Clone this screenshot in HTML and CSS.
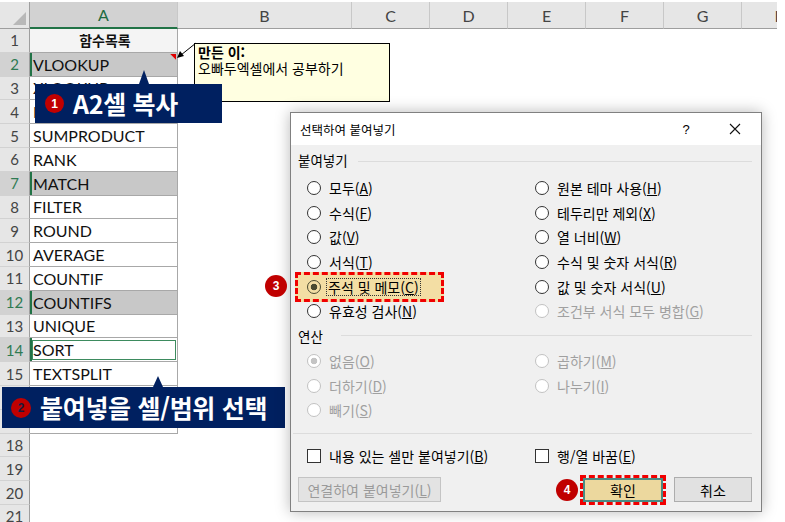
FILE: index.html
```html
<!DOCTYPE html>
<html lang="ko">
<head>
<meta charset="utf-8">
<link rel="stylesheet" href="styles.css">
</head>
<body>
<div class="sheet">
  <div class="hdr corner"><span class="tri"></span></div>
  <div class="hdr sel">A</div>
  <div class="hdr">B</div>
  <div class="hdr">C</div>
  <div class="hdr">D</div>
  <div class="hdr">E</div>
  <div class="hdr">F</div>
  <div class="hdr">G</div>
  <div class="hdr">H</div>

  <div class="rh">1</div><div class="ca head">함수목록</div><div class="rest"></div>
  <div class="rh on">2</div><div class="ca pick">VLOOKUP<span class="flag"></span></div><div class="rest"></div>
  <div class="rh">3</div><div class="ca">XLOOKUP</div><div class="rest"></div>
  <div class="rh">4</div><div class="ca">INDEX</div><div class="rest"></div>
  <div class="rh">5</div><div class="ca">SUMPRODUCT</div><div class="rest"></div>
  <div class="rh">6</div><div class="ca">RANK</div><div class="rest"></div>
  <div class="rh on">7</div><div class="ca pick">MATCH</div><div class="rest"></div>
  <div class="rh">8</div><div class="ca">FILTER</div><div class="rest"></div>
  <div class="rh">9</div><div class="ca">ROUND</div><div class="rest"></div>
  <div class="rh">10</div><div class="ca">AVERAGE</div><div class="rest"></div>
  <div class="rh">11</div><div class="ca">COUNTIF</div><div class="rest"></div>
  <div class="rh on">12</div><div class="ca pick">COUNTIFS</div><div class="rest"></div>
  <div class="rh">13</div><div class="ca">UNIQUE</div><div class="rest"></div>
  <div class="rh on">14</div><div class="ca active">SORT</div><div class="rest"></div>
  <div class="rh">15</div><div class="ca">TEXTSPLIT</div><div class="rest"></div>
  <div class="rh">16</div><div class="ca">TOCOL</div><div class="rest"></div>
  <div class="rh">17</div><div class="ca">VSTACK</div><div class="rest"></div>
  <div class="rh">18</div><div class="ce"></div><div class="rest"></div>
  <div class="rh">19</div><div class="ce"></div><div class="rest"></div>
  <div class="rh">20</div><div class="ce"></div><div class="rest"></div>
  <div class="rh">21</div><div class="ce"></div><div class="rest"></div>
</div>

<svg class="cmt-arrow" width="26" height="22" viewBox="0 0 26 22">
  <line x1="7" y1="15" x2="22" y2="3" stroke="#000" stroke-width="1"/>
  <polygon points="3,18 6,11 10,16" fill="#000"/>
</svg>
<div class="cmt">
  <div class="cmt-author">만든 이:</div>
  <div>오빠두엑셀에서 공부하기</div>
</div>

<div class="callout co1">
  <span class="num">1</span><span class="co-text">A2셀 복사</span>
</div>
<div class="callout co2">
  <span class="num dark">2</span><span class="co-text">붙여넣을 셀/범위 선택</span>
</div>

<div class="dlg">
  <div class="dlg-title">
    <span class="dlg-name">선택하여 붙여넣기</span>
    <span class="help">?</span>
    <span class="close"><svg width="12" height="12" viewBox="0 0 12 12"><path d="M1 1L11 11M11 1L1 11" stroke="#111" stroke-width="1.1" fill="none"/></svg></span>
  </div>
  <div class="dlg-body">
    <div class="grp"><span>붙여넣기</span><i></i></div>
    <div class="opts">
      <div class="r"><span class="rad"></span><span>모두(<u>A</u>)</span></div>
      <div class="r"><span class="rad"></span><span>원본 테마 사용(<u>H</u>)</span></div>
      <div class="r"><span class="rad"></span><span>수식(<u>F</u>)</span></div>
      <div class="r"><span class="rad"></span><span>테두리만 제외(<u>X</u>)</span></div>
      <div class="r"><span class="rad"></span><span>값(<u>V</u>)</span></div>
      <div class="r"><span class="rad"></span><span>열 너비(<u>W</u>)</span></div>
      <div class="r"><span class="rad"></span><span>서식(<u>T</u>)</span></div>
      <div class="r"><span class="rad"></span><span>수식 및 숫자 서식(<u>R</u>)</span></div>
      <div class="r hl"><span class="rad checked"></span><span class="focus">주석 및 메모(<u>C</u>)</span></div>
      <div class="r"><span class="rad"></span><span>값 및 숫자 서식(<u>U</u>)</span></div>
      <div class="r"><span class="rad"></span><span>유효성 검사(<u>N</u>)</span></div>
      <div class="r off"><span class="rad"></span><span>조건부 서식 모두 병합(<u>G</u>)</span></div>
    </div>
    <div class="grp grp2"><span>연산</span><i></i></div>
    <div class="opts ops">
      <div class="r off"><span class="rad checked"></span><span>없음(<u>O</u>)</span></div>
      <div class="r off"><span class="rad"></span><span>곱하기(<u>M</u>)</span></div>
      <div class="r off"><span class="rad"></span><span>더하기(<u>D</u>)</span></div>
      <div class="r off"><span class="rad"></span><span>나누기(<u>I</u>)</span></div>
      <div class="r off"><span class="rad"></span><span>빼기(<u>S</u>)</span></div>
    </div>
    <div class="sep"></div>
    <div class="opts checks">
      <div class="r"><span class="chk"></span><span>내용 있는 셀만 붙여넣기(<u>B</u>)</span></div>
      <div class="r"><span class="chk"></span><span>행/열 바꿈(<u>E</u>)</span></div>
    </div>
    <div class="btns">
      <span class="btn link">연결하여 붙여넣기(<u>L</u>)</span>
      <span class="ok-wrap"><span class="btn ok">확인</span></span>
      <span class="btn cancel">취소</span>
    </div>
  </div>
</div>

<span class="badge b3">3</span>
<span class="badge b4">4</span>
</body>
</html>
```
FILE: styles.css
```css
* { box-sizing: border-box; margin: 0; padding: 0; }

body {
  margin: 0;
  width: 785px;
  height: 522px;
  overflow: hidden;
  background: #fff;
  position: relative;
  font-family: "Noto Sans CJK KR", sans-serif;
}

/* ---------- spreadsheet ---------- */
.sheet {
  display: grid;
  grid-template-columns: 30px 148px 174px 78px 78px 78px 78px 78px 78px;
  grid-template-rows: 27px;
  grid-auto-rows: 23.8px;
  margin-top: 2px;
  width: 777px;
  overflow: hidden;
  font-family: Lato, "Noto Sans CJK KR", sans-serif;
}

.hdr {
  background: #e6e6e6;
  border-right: 1px solid #c8c8c8;
  border-bottom: 1px solid #9e9e9e;
  display: flex;
  align-items: center;
  justify-content: center;
  font-size: 16px;
  color: #444;
}
.hdr.sel {
  background: #d2d2d2;
  color: #1e6b41;
  border-bottom: 2px solid #217346;
}
.corner {
  justify-content: flex-end;
  align-items: flex-end;
  padding: 0 3px 3px 0;
  border-right: 1px solid #9e9e9e;
}
.corner .tri {
  width: 13px;
  height: 13px;
  background: #b8b8b8;
  clip-path: polygon(100% 0, 100% 100%, 0 100%);
}

.rh {
  background: #e6e6e6;
  border-right: 1px solid #9e9e9e;
  border-bottom: 1px solid #d2d2d2;
  display: flex;
  align-items: center;
  justify-content: center;
  font-size: 15px;
  color: #444;
}
.rh.on {
  background: #d2d2d2;
  color: #2f7a52;
}

.ca {
  border-right: 1px solid #a8a8a8;
  border-bottom: 1px solid #a8a8a8;
  padding-left: 3px;
  font-size: 16px;
  color: #111;
  display: flex;
  align-items: center;
  background: #fff;
}
.ca.head {
  justify-content: center;
  font-family: "Noto Sans CJK KR", sans-serif;
  font-weight: 700;
  font-size: 14px;
  background: #f4f4f4;
}
.ca.pick {
  background: #c8c8c8;
  box-shadow: inset 2px 0 0 #217346;
}
.ca.active {
  box-shadow: inset 2px 0 0 #217346;
  outline: 1px solid #3d8b5e;
  outline-offset: -3px;
}
.flag {
  margin-left: auto;
  align-self: flex-start;
  margin-top: 1px;
  margin-right: 1px;
  width: 6px;
  height: 6px;
  background: #e00000;
  clip-path: polygon(0 0, 100% 0, 100% 100%);
}
.ce { background: #fff; }
.rest { grid-column: 3 / -1; }

/* ---------- comment ---------- */
.cmt-arrow {
  position: absolute;
  left: 174px;
  top: 40px;
}
.cmt {
  position: absolute;
  left: 194px;
  top: 43px;
  width: 196px;
  height: 59px;
  background: #ffffe1;
  border: 1px solid #000;
  padding: 0 3px;
  font-size: 14px;
  line-height: 16px;
  color: #000;
}
.cmt-author { font-weight: 700; }

/* ---------- callouts ---------- */
.callout {
  position: absolute;
  background: #002060;
  display: flex;
  align-items: center;
  color: #fff;
}
.callout::before {
  content: "";
  position: absolute;
  top: -14px;
  width: 0;
  height: 0;
  border-left: 5px solid transparent;
  border-right: 5px solid transparent;
  border-bottom: 14px solid #002060;
}
.co1 {
  left: 35px;
  top: 84px;
  width: 187px;
  height: 39px;
  padding-left: 10px;
}
.co1::before { left: 104px; }
.co2 {
  left: 2px;
  top: 387px;
  width: 283px;
  height: 41px;
  padding-left: 9px;
}
.co2::before { left: 151px; top: -11px; border-bottom-width: 11px; }

.num {
  width: 19px;
  height: 19px;
  border-radius: 50%;
  background: #c00000;
  color: #fff;
  font-family: "Liberation Sans", sans-serif;
  font-size: 12px;
  font-weight: 700;
  display: flex;
  align-items: center;
  justify-content: center;
  margin-right: 9px;
  flex: none;
}
.num.dark { color: #1b1b3a; width: 20px; height: 20px; }
.co-text {
  font-size: 25px;
  font-weight: 700;
  line-height: 1;
  white-space: nowrap;
  letter-spacing: -0.3px;
}

/* ---------- dialog ---------- */
.dlg {
  position: absolute;
  left: 290px;
  top: 112px;
  width: 472px;
  height: 400px;
  border: 1px solid #808080;
  background: #f0f0f0;
  box-shadow: 0 0 14px rgba(0, 0, 0, 0.28);
  font-size: 14px;
  color: #000;
  display: flex;
  flex-direction: column;
}
.dlg-title {
  height: 32px;
  background: #fff;
  display: flex;
  align-items: center;
  padding-left: 9px;
  padding-right: 3px;
  flex: none;
}
.dlg-name { font-size: 12.5px; }
.help {
  margin-left: auto;
  width: 32px;
  text-align: center;
  margin-right: 10px;
  font-family: "Liberation Sans", sans-serif;
  font-size: 13px;
}
.close {
  width: 46px;
  height: 32px;
  display: flex;
  align-items: center;
  justify-content: center;
}

.dlg-body {
  padding: 0 9px 0 7px;
  display: flex;
  flex-direction: column;
}
.grp {
  display: flex;
  align-items: center;
  height: 16px;
  margin-top: 7px;
  line-height: 16px;
  font-size: 13.5px;
}
.grp i {
  flex: 1;
  height: 1px;
  background: #dcdcdc;
  margin-left: 10px;
  margin-top: 2px;
}
.grp2 { margin-top: 4px; }
.grp2 i { margin-left: 18px; margin-top: 0; }

.opts {
  display: grid;
  grid-template-columns: 228px 1fr;
  grid-auto-rows: 24.6px;
  padding-left: 9px;
  margin-top: 8px;
}
.ops { margin-top: 5.4px; }
.checks { margin-top: 12px; grid-auto-rows: 20px; }

.r {
  display: flex;
  align-items: center;
  gap: 8px;
  line-height: 16px;
  white-space: nowrap;
}
.r u { text-underline-offset: 1px; }
.rad {
  width: 14px;
  height: 14px;
  border-radius: 50%;
  border: 1px solid #333;
  background: #fff;
  flex: none;
}
.rad.checked {
  background: radial-gradient(circle, #333 0 3px, #fff 3.6px);
}
.r.off { color: #a0a0a0; }
.r.off .rad { border-color: #c2c2c2; background: #fff; }
.r.off .rad.checked {
  background: radial-gradient(circle, #c4c4c4 0 3px, #fff 3.6px);
}

.r.hl {
  margin-left: -12px;
  padding-left: 9px;
  width: 149px;
  height: 30px;
  align-self: center;
  border: 3px dashed #f00000;
  background: #f3dea4;
  gap: 6px;
}
.r.hl .rad {
  background: radial-gradient(circle, #4a4a30 0 3px, transparent 3.6px);
  border-color: #4a4a30;
}
.focus {
  outline: 1px dotted #333;
  outline-offset: 0;
  padding: 0 1px;
}

.chk {
  width: 14px;
  height: 14px;
  border: 1px solid #333;
  background: #fff;
  flex: none;
}

.sep {
  height: 1px;
  background: #dcdcdc;
  margin: 10px 0 0 -5px;
}

.btns {
  display: flex;
  align-items: center;
  height: 30px;
  margin-top: 9px;
}
.btn {
  display: flex;
  align-items: center;
  justify-content: center;
  height: 25px;
  border: 1px solid #adadad;
  background: #e1e1e1;
  font-size: 14px;
}
.btn.link {
  width: 143px;
  color: #9a9a9a;
  border-color: #c4c4c4;
  background: #e3e3e3;
}
.ok-wrap {
  margin-left: auto;
  border: 3px dashed #f00000;
  width: 86px;
  height: 30px;
  display: flex;
}
.btn.ok {
  flex: 1;
  height: 100%;
  border: 2px solid #4a8b84;
  background: #ecd89e;
}
.btn.cancel {
  width: 78px;
  margin-left: 8px;
}

/* ---------- badges ---------- */
.badge {
  position: absolute;
  width: 22px;
  height: 22px;
  border-radius: 50%;
  background: #c00000;
  color: #fff;
  font-family: "Liberation Sans", sans-serif;
  font-weight: 700;
  font-size: 12px;
  display: flex;
  align-items: center;
  justify-content: center;
}
.b3 { left: 265px; top: 275px; }
.b4 { left: 556px; top: 479px; }
```
